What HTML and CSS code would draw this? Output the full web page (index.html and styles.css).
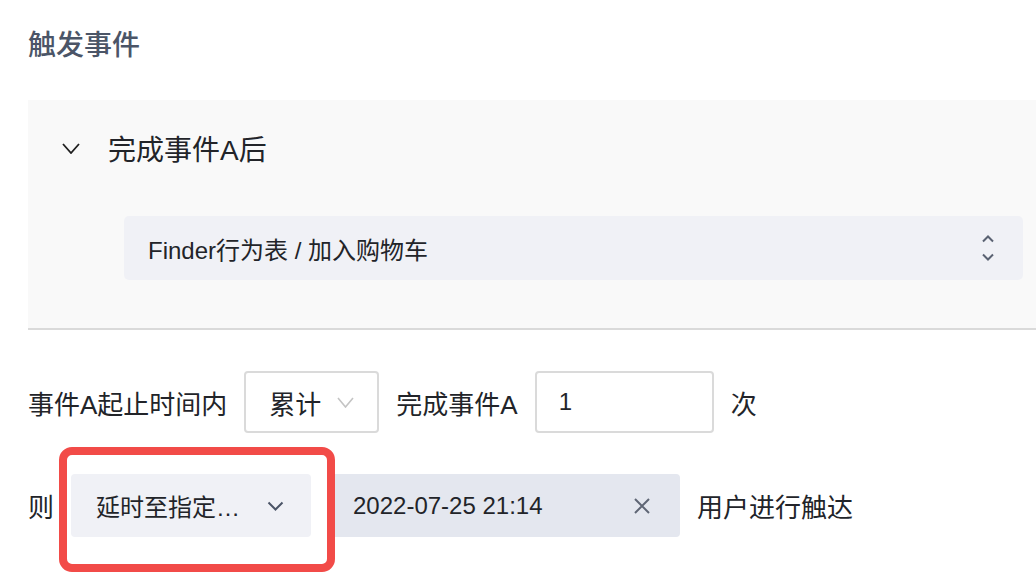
FILE: index.html
```html
<!DOCTYPE html>
<html>
<head>
  <title>触发事件</title>
  <link rel="stylesheet" href="styles.css">
</head>
<body>

<div class="page">
  <h2 class="title">触发事件</h2>

  <div class="panel">
    <div class="panel-head">
      <svg class="ico-fold" width="18" height="11" viewBox="0 0 18 11"><path d="M1 1 L9 10 L17 1" fill="none" stroke="#1f1f1f" stroke-width="1.8"/></svg>
      <span>完成事件A后</span>
    </div>
    <div class="event-select">
      <span>Finder行为表 / 加入购物车</span>
      <svg width="12" height="26" viewBox="0 0 12 26"><path d="M1 6.5 L6 1.5 L11 6.5" fill="none" stroke="#5a6272" stroke-width="2"/><path d="M1 19.5 L6 24.5 L11 19.5" fill="none" stroke="#5a6272" stroke-width="2"/></svg>
    </div>
  </div>

  <div class="row">
    <span>事件A起止时间内</span>
    <div class="select-box">
      <span>累计</span>
      <svg width="17" height="11" viewBox="0 0 17 11"><path d="M1 1 L8.5 10 L16 1" fill="none" stroke="#c4c4c4" stroke-width="1.6"/></svg>
    </div>
    <span>完成事件A</span>
    <div class="num-input">1</div>
    <span>次</span>
  </div>

  <div class="row row-then">
    <span>则</span>
    <div class="mark-wrap">
      <div class="delay-select">
        <span>延时至指定…</span>
        <svg width="17" height="10" viewBox="0 0 17 10"><path d="M1.5 1.5 L8.5 8.5 L15.5 1.5" fill="none" stroke="#4b5567" stroke-width="2"/></svg>
      </div>
      <div class="mark"></div>
    </div>
    <div class="date-box">
      <span>2022-07-25 21:14</span>
      <svg width="16" height="16" viewBox="0 0 16 16"><path d="M1 1 L15 15 M15 1 L1 15" fill="none" stroke="#5f6675" stroke-width="2"/></svg>
    </div>
    <span>用户进行触达</span>
  </div>
</div>

</body>
</html>
```

FILE: styles.css
```css
html {
  overflow: hidden;
}

body {
  margin: 0;
  background-color: #ffffff;
  font-family: "Liberation Sans", "Noto Sans CJK SC", sans-serif;
  color: #222429;
}

.page {
  padding: 26px 0 60px 28px;
}

.title {
  margin: 0;
  font-size: 28px;
  line-height: 40px;
  font-weight: 500;
  color: #4b5567;
}

.panel {
  margin-top: 34px;
  background-color: #f9f9f9;
  border-bottom: 2px solid #dadada;
  padding: 28px 0 48px 0;
}

.panel-head {
  display: flex;
  align-items: center;
  gap: 28px;
  height: 40px;
  padding-left: 34px;
  font-size: 28px;
}

.event-select {
  display: flex;
  align-items: center;
  justify-content: space-between;
  height: 64px;
  margin: 48px 13px 0 96px;
  padding: 0 29px 0 24px;
  background-color: #f0f1f6;
  border-radius: 5px;
  font-size: 24px;
}

.row {
  display: flex;
  align-items: center;
  gap: 17px;
  margin-top: 41px;
  height: 62px;
  font-size: 26px;
}

.row-then {
  height: 63px;
}

.select-box {
  display: flex;
  align-items: center;
  gap: 16px;
  box-sizing: border-box;
  width: 135px;
  height: 62px;
  padding-left: 23px;
  border: 2px solid #dadada;
  border-radius: 4px;
  font-size: 26px;
}

.num-input {
  box-sizing: border-box;
  width: 179px;
  height: 62px;
  line-height: 58px;
  padding-left: 22px;
  border: 2px solid #dadada;
  border-radius: 4px;
  font-size: 24px;
}

.mark-wrap {
  position: relative;
}

.delay-select {
  display: flex;
  align-items: center;
  justify-content: space-between;
  box-sizing: border-box;
  width: 240px;
  height: 63px;
  padding: 0 27px 0 25px;
  background-color: #f0f1f6;
  border-radius: 4px;
  font-size: 24px;
}

/* red annotation frame */
.mark {
  position: absolute;
  left: -12px;
  top: -27px;
  right: -24px;
  bottom: -35px;
  border: 8px solid #f24b48;
  border-radius: 13px;
  z-index: 2;
}

.date-box {
  display: flex;
  align-items: center;
  justify-content: space-between;
  box-sizing: border-box;
  width: 352px;
  height: 63px;
  padding: 0 30px 0 25px;
  background-color: #e4e7ef;
  border-radius: 4px;
  font-size: 24px;
}
```
